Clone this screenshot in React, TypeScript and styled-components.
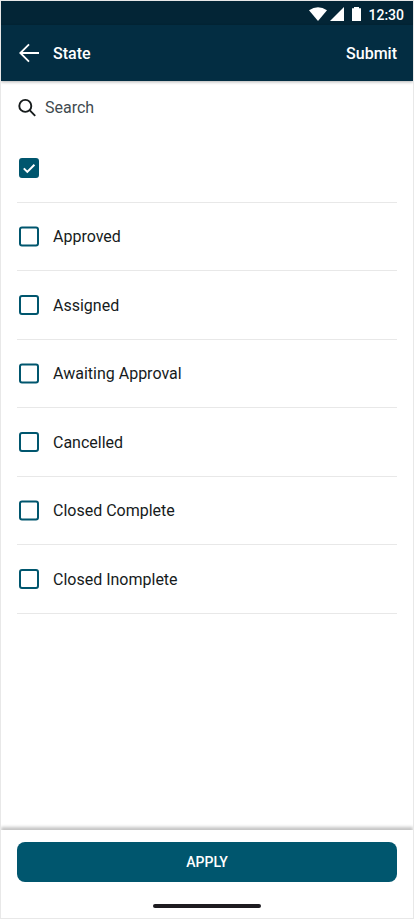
import React from "react";
import styled, { createGlobalStyle } from "styled-components";

const GlobalStyle = createGlobalStyle`
  *, *::before, *::after { box-sizing: border-box; }
  body { margin: 0; background: #fff; }
`;

const Screen = styled.div`
  display: flex;
  flex-direction: column;
  width: 414px;
  height: 919px;
  border: 1px solid #e8e8e8;
  background: #fff;
  color: #161b1c;
  font-family: Roboto, "Liberation Sans", sans-serif;
  font-size: 16px;
  line-height: 24px;
  overflow: hidden;
`;

const StatusBar = styled.div`
  display: flex;
  flex: none;
  align-items: center;
  justify-content: flex-end;
  height: 24px;
  padding-right: 9px;
  background: #032536;
  color: #fff;
`;

const Clock = styled.span`
  margin: 4px 0 0 6px;
  font-size: 14px;
  font-weight: 500;
  line-height: 20px;
`;

const Header = styled.header`
  display: flex;
  flex: none;
  align-items: center;
  height: 56px;
  padding: 0 16px;
  background: #032d42;
  color: #fff;
  box-shadow: 0 1px 3px rgba(0, 0, 0, 0.3);
`;

const BackButton = styled.button`
  display: flex;
  padding: 0;
  border: 0;
  background: none;
  color: inherit;
`;

const Title = styled.h1`
  flex: 1;
  margin: 0 0 0 12px;
  padding-top: 2px;
  font-size: 16px;
  font-weight: 500;
`;

const Submit = styled.button`
  padding: 2px 0 0;
  border: 0;
  background: none;
  color: inherit;
  font: inherit;
  font-weight: 500;
`;

const SearchBar = styled.div`
  display: flex;
  flex: none;
  align-items: center;
  gap: 8px;
  height: 53px;
  padding: 0 16px;
  color: #3f4b50;
`;

const List = styled.ul`
  flex: 1;
  margin: 0;
  padding: 0 16px;
  list-style: none;
`;

const Row = styled.li<{ $tall: boolean }>`
  display: flex;
  align-items: center;
  gap: 12px;
  height: ${(p) => (p.$tall ? 69 : 68)}px;
  border-bottom: 1px solid #e8e8e8;
`;

const Label = styled.span<{ $tall: boolean }>`
  padding-top: ${(p) => (p.$tall ? 2 : 0)}px;
`;

const Footer = styled.footer`
  display: flex;
  flex: none;
  flex-direction: column;
  align-items: center;
  height: 88px;
  padding: 12px 16px 0;
  background: #fff;
  box-shadow: 0 -3px 3px rgba(0, 0, 0, 0.23);
`;

const Apply = styled.button`
  width: 100%;
  height: 40px;
  padding: 0;
  border: 0;
  border-radius: 8px;
  background: #00566e;
  color: #fff;
  font: 500 14px/20px Roboto, "Liberation Sans", sans-serif;
`;

const HomeIndicator = styled.div`
  width: 108px;
  height: 4px;
  margin-top: 22px;
  border-radius: 2px;
  background: #1d1b20;
`;

const StatusIcons = () => (
  <svg width="54" height="24" viewBox="308 1 54 24" fill="currentColor">
    <path d="M309 10.2Q318 4.4 327 10.2L318 21Z" />
    <path d="M344 7V21H330Z" />
    <path d="M354 8.3V7H359V8.3H361V21H352V8.3Z" />
  </svg>
);

const BackIcon = () => (
  <svg width="24" height="24" fill="none" stroke="currentColor" strokeWidth="1.8">
    <path d="M22 12H3.3M12 3.3L3.3 12L12 20.7" />
  </svg>
);

const SearchIcon = () => (
  <svg width="20" height="20" viewBox="0 0.5 20 20" fill="none" stroke="#161b1c" strokeWidth="1.9">
    <circle cx="8.3" cy="8.4" r="6" />
    <path d="M12.6 12.7L18.2 18.3" />
  </svg>
);

const Checkbox = ({ checked, tall }: { checked: boolean; tall: boolean }) => (
  <svg
    width="24"
    height={tall ? 24 : 25}
    viewBox={tall ? "0 0 24 24" : "0 -0.5 24 25"}
    role="checkbox"
    aria-checked={checked}
  >
    <rect
      x="3" y="3" width="18" height="18" rx="2"
      fill={checked ? "#00566e" : "none"}
      stroke="#00566e"
      strokeWidth="2"
    />
    {checked && (
      <path d="M6.8 12.4L10.3 15.9L17.4 8.8" fill="none" stroke="#fff" strokeWidth="2" />
    )}
  </svg>
);

const options = [
  { label: "", checked: true },
  { label: "Approved", checked: false },
  { label: "Assigned", checked: false },
  { label: "Awaiting Approval", checked: false },
  { label: "Cancelled", checked: false },
  { label: "Closed Complete", checked: false },
  { label: "Closed Inomplete", checked: false },
];

export default function App() {
  return (
    <>
      <GlobalStyle />
      <Screen>
        <StatusBar>
          <StatusIcons />
          <Clock>12:30</Clock>
        </StatusBar>
        <Header>
          <BackButton aria-label="Back"><BackIcon /></BackButton>
          <Title>State</Title>
          <Submit>Submit</Submit>
        </Header>
        <SearchBar>
          <SearchIcon />
          <span>Search</span>
        </SearchBar>
        <List>
          {options.map(({ label, checked }, i) => (
            <Row key={label} $tall={i % 2 === 0}>
              <Checkbox checked={checked} tall={i % 2 === 0} />
              <Label $tall={i % 2 === 0}>{label}</Label>
            </Row>
          ))}
        </List>
        <Footer>
          <Apply>APPLY</Apply>
          <HomeIndicator />
        </Footer>
      </Screen>
    </>
  );
}
